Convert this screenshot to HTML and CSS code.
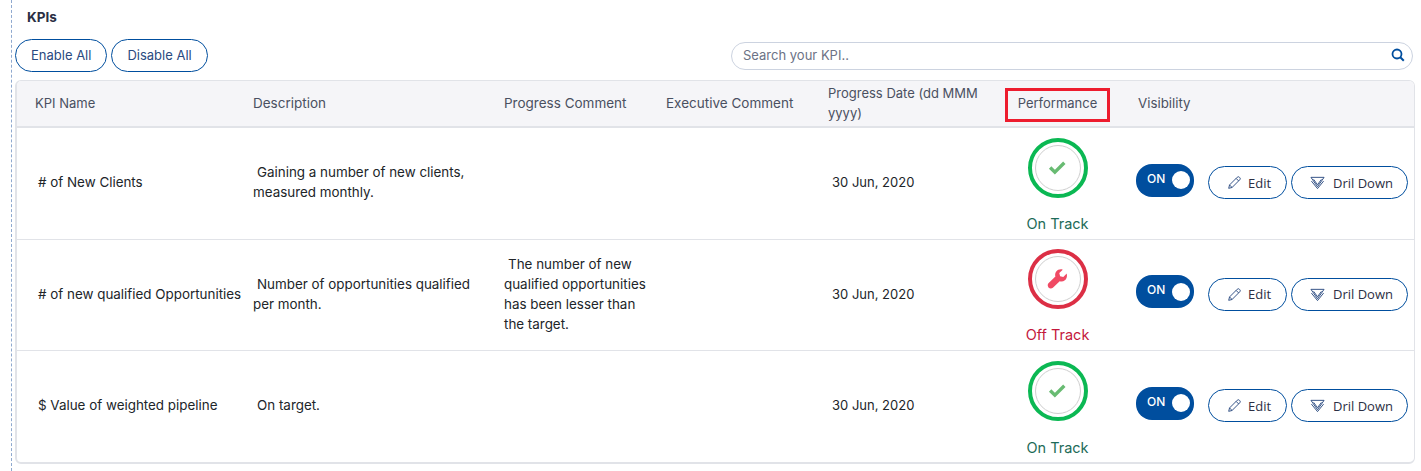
FILE: index.html
```html
<!DOCTYPE html>
<html lang="en">
<head>
<meta charset="utf-8">
<title>KPIs</title>
<link rel="stylesheet" href="styles.css">
</head>
<body>
<svg class="defs" width="0" height="0" aria-hidden="true">
  <symbol id="pencil" viewBox="0 0 16 16"><path d="M1.8 14.2l.9-3.6L10.9 2.4a1.6 1.6 0 0 1 2.3 0l.4.4a1.6 1.6 0 0 1 0 2.3L5.400 13.300zM2.700 10.600l2.700 2.700M9.700 3.600l2.700 2.700" fill="none" stroke="currentColor" stroke-width="1"/></symbol>
  <symbol id="drill" viewBox="0 0 16 16"><path d="M1 2.500h14L8 12.500zM3.800 4.600L8 10.400l4.200-5.800" fill="none" stroke="currentColor" stroke-width="1"/><path d="M1.500 6.500L8 14.500l6.500-8" fill="none" stroke="currentColor" stroke-width="1"/></symbol>
  <symbol id="check" viewBox="0 0 20 20"><path d="M3 10l4.500 4.500 9-9" fill="none" stroke="currentColor" stroke-width="3.200"/></symbol>
  <symbol id="wrench" viewBox="0 0 20 20"><path d="M18.800 4.400l-3.300 3.300-3-.8-.8-3 3.300-3.300c-2.300-.7-4.800 0-6.200 1.700-1.100 1.400-1.300 3.200-.8 4.800L1.600 13.400c-1.300 1.300-1.100 3-.2 4.100 1.100 1.200 2.900 1.400 4.200.3l6.500-6.200c1.700.6 3.500.2 4.900-.9 1.700-1.400 2.400-3.800 1.800-5.900z" fill="currentColor"/></symbol>
</svg>
<main class="page">
  <h1 class="title">KPIs</h1>
  <div class="toolbar">
    <div class="toolbar-buttons">
      <button class="pill">Enable All</button>
      <button class="pill">Disable All</button>
    </div>
    <div class="search">
      <span class="search-text">Search your KPI..</span>
      <svg class="search-icon" viewBox="0 0 14 14"><circle cx="6" cy="6" r="4.500" fill="none" stroke="currentColor" stroke-width="1.800"/><path d="M9.300 9.300L12.800 12.800" stroke="currentColor" stroke-width="2"/></svg>
    </div>
  </div>
  <div class="table-card">
    <table class="kpi-table">
      <colgroup>
        <col class="c-name"><col class="c-desc"><col class="c-prog"><col class="c-exec"><col class="c-date"><col class="c-perf"><col class="c-vis">
      </colgroup>
      <thead>
        <tr>
          <th class="first">KPI Name</th>
          <th class="wide">Description</th>
          <th class="wide">Progress Comment</th>
          <th class="wide">Executive Comment</th>
          <th>Progress Date (dd MMM yyyy)</th>
          <th class="perf-head"><span class="perf-label">Performance</span><span class="highlight"></span></th>
          <th class="vis-head">Visibility</th>
        </tr>
      </thead>
      <tbody>
        <tr>
          <td class="name">&#35; of New Clients</td>
          <td><span class="lead">Gaining a number of new clients, measured monthly.</span></td>
          <td></td>
          <td></td>
          <td class="date">30 Jun, 2020</td>
          <td class="perf"><span class="dial dial-on"><span class="dial-inner"><svg class="glyph-check"><use href="#check"/></svg></span></span><span class="status on">On Track</span></td>
          <td class="vis"><div class="actions"><span class="toggle"><span class="toggle-text">ON</span><span class="knob"></span></span><button class="pill small edit"><svg class="btn-icon"><use href="#pencil"/></svg>Edit</button><button class="pill small drill"><svg class="btn-icon"><use href="#drill"/></svg>Dril Down</button></div></td>
        </tr>
        <tr>
          <td class="name">&#35; of new qualified Opportunities</td>
          <td><span class="lead">Number of opportunities qualified per month.</span></td>
          <td><span class="lead">The number of new qualified opportunities has been lesser than the target.</span></td>
          <td></td>
          <td class="date">30 Jun, 2020</td>
          <td class="perf"><span class="dial dial-off"><span class="dial-inner"><svg class="glyph-wrench"><use href="#wrench"/></svg></span></span><span class="status off">Off Track</span></td>
          <td class="vis"><div class="actions"><span class="toggle"><span class="toggle-text">ON</span><span class="knob"></span></span><button class="pill small edit"><svg class="btn-icon"><use href="#pencil"/></svg>Edit</button><button class="pill small drill"><svg class="btn-icon"><use href="#drill"/></svg>Dril Down</button></div></td>
        </tr>
        <tr>
          <td class="name">$ Value of weighted pipeline</td>
          <td><span class="lead">On target.</span></td>
          <td></td>
          <td></td>
          <td class="date">30 Jun, 2020</td>
          <td class="perf"><span class="dial dial-on"><span class="dial-inner"><svg class="glyph-check"><use href="#check"/></svg></span></span><span class="status on">On Track</span></td>
          <td class="vis"><div class="actions"><span class="toggle"><span class="toggle-text">ON</span><span class="knob"></span></span><button class="pill small edit"><svg class="btn-icon"><use href="#pencil"/></svg>Edit</button><button class="pill small drill"><svg class="btn-icon"><use href="#drill"/></svg>Dril Down</button></div></td>
        </tr>
      </tbody>
    </table>
  </div>
</main>
</body>
</html>
```
FILE: styles.css
```css
* { box-sizing: border-box; }
html, body { margin: 0; height: 471px; overflow: hidden; background: #fff; }
body { font-family: Inter, "Liberation Sans", sans-serif; font-size: 13px; color: #212529; }
.defs { position: absolute; }
.page {
  margin-left: 11px;
  border-left: 1px dashed #8fa9cf;
  padding-left: 3px;
  padding-right: 8px;
  height: 471px;
}
.title { margin: 0; padding: 9px 0 0 12px; height: 39px; font-size: 13.500px; line-height: 16px; font-weight: 700; color: #2b2f44; }
.toolbar { display: flex; justify-content: space-between; align-items: flex-start; height: 41px; }
.toolbar-buttons { display: flex; gap: 4px; }
.pill {
  font: inherit;
  height: 33px;
  border: 1px solid #004e9e;
  border-radius: 17px;
  background: #fff;
  color: #2a4a80;
  padding: 0 15px 2px;
  white-space: nowrap;
  display: inline-flex;
  align-items: center;
}
.search {
  width: 682px;
  height: 28px;
  margin-top: 3px;
  border: 1px solid #ccd3e0;
  border-radius: 14px;
  display: flex;
  align-items: center;
  justify-content: space-between;
  padding: 0 7px 2px 11px;
}
.search-text { color: #6c7285; }
.search-icon { width: 14px; height: 14px; color: #004e9e; }
.table-card {
  width: 1400px;
  border: 1px solid #e1e3e8;
  border-width: 1px 1px 2px 2px;
  border-radius: 6px;
  overflow: hidden;
}
.kpi-table { width: 100%; border-collapse: collapse; table-layout: fixed; }
.c-name { width: 226px; }
.c-desc { width: 251px; }
.c-prog { width: 162px; }
.c-exec { width: 162px; }
.c-date { width: 189px; }
.c-perf { width: 101px; }
thead th {
  height: 46px;
  background: #f5f5f8;
  border-bottom: 2px solid #e1e3e8;
  padding: 0 10px 1px;
  text-align: left;
  font-weight: 400;
  color: #4a5061;
  line-height: 20px;
}
thead th.first { padding-left: 18px; }
thead th.wide { font-size: 13.500px; }
.perf-head { position: relative; text-align: center; white-space: nowrap; }
.highlight { position: absolute; left: -2px; top: 7px; width: 105px; height: 34px; border: 3px solid #ed1c2e; }
thead th.vis-head { padding-left: 30px; font-size: 13.300px; }
tbody td { height: 112px; padding: 0 10px 2px; border-bottom: 1px solid #e1e3e8; vertical-align: middle; line-height: 20px; font-size: 13.400px; color: #212529; }
tbody tr:nth-child(2) td { height: 111px; }
tbody tr:last-child td { border-bottom: 0; }
tbody td.name { padding: 0 0 2px 21px; white-space: nowrap; }
.lead::before { content: " "; display: inline-block; width: 4px; }
tbody td.date { padding-left: 14px; font-size: 13px; }
tbody td.perf { padding: 5px 0 0; text-align: center; }
tbody tr:last-child td.perf { padding-top: 6px; }
.dial { display: flex; width: 60px; height: 60px; border-radius: 50%; border-width: 4px; border-style: solid; margin: 0 auto; align-items: center; justify-content: center; }
.dial-on { border-color: #0bb853; }
.dial-off { border-color: #dc2f45; }
.dial-inner { width: 46px; height: 46px; border-radius: 50%; border: 1px solid #cfcfcf; display: flex; align-items: center; justify-content: center; }
.glyph-check { width: 21px; height: 21px; color: #68bb72; }
.glyph-wrench { width: 21px; height: 21px; color: #f04a64; }
.status { display: block; margin-top: 16px; font-size: 14.500px; line-height: 20px; }
tbody tr:last-child .status { margin-top: 17px; }
.status.on { color: #1d6b58; }
.status.off { color: #c4183c; }
tbody td.vis { padding: 0 0 0 28px; }
.actions { display: flex; align-items: center; margin-top: -6px; }
.toggle { display: flex; align-items: center; justify-content: space-between; width: 58px; height: 33px; border-radius: 16px; background: #004e9e; color: #fff; font-size: 12px; font-weight: 500; padding: 0 4px 0 11px; }
.toggle-text { margin-top: -3px; }
.knob { width: 18px; height: 18px; border-radius: 50%; background: #fff; }
.pill.small { color: #2b2f44; margin-top: 5px; font-family: "Open Sans", Inter, sans-serif; font-size: 13px; padding-bottom: 0; }
.pill.edit { width: 79px; margin-left: 14px; padding-left: 18px; padding-right: 0; }
.pill.drill { width: 117px; margin-left: 4px; padding-left: 18px; padding-right: 0; }
.btn-icon { width: 15px; height: 15px; margin-right: 6px; color: #2a4a80; flex: none; }
.drill .btn-icon { margin-right: 8px; }
```
